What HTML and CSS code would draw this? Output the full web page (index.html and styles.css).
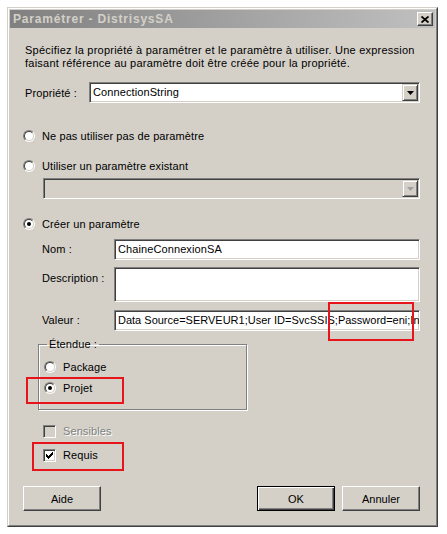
FILE: index.html
```html
<!DOCTYPE html>
<html lang="fr">
<head>
<meta charset="utf-8">
<title>Paramétrer - DistrisysSA</title>
<link rel="stylesheet" href="styles.css">
</head>
<body>
<div class="dialog">
  <div class="frame">
    <div class="titlebar">
      <span class="title">Paramétrer - DistrisysSA</span>
      <span class="close"><svg width="8" height="7" viewBox="0 0 8 7"><path d="M0.5 0.5 L7.5 6.5 M7.5 0.5 L0.5 6.5" stroke="#000" stroke-width="1.8" fill="none"/></svg></span>
    </div>
    <div class="content">
      <p class="intro">Spécifiez la propriété à paramétrer et le paramètre à utiliser. Une expression<br>faisant référence au paramètre doit être créée pour la propriété.</p>

      <div class="prop-row">
        <span class="prop-label">Propriété :</span>
        <div class="combo">
          <span class="combo-text">ConnectionString</span>
          <span class="drop"><svg width="7" height="4" viewBox="0 0 7 4"><path d="M0 0 H7 L3.5 4 Z" fill="#000"/></svg></span>
        </div>
      </div>

      <div class="radio-row r1"><span class="radio"></span><span>Ne pas utiliser pas de paramètre</span></div>
      <div class="radio-row r2"><span class="radio"></span><span>Utiliser un paramètre existant</span></div>
      <div class="combo combo-disabled">
        <span class="combo-text"></span>
        <span class="drop"><svg width="7" height="4" viewBox="0 0 7 4"><path d="M0 0 H7 L3.5 4 Z" fill="#a0a0a0"/></svg></span>
      </div>
      <div class="radio-row r3"><span class="radio checked"></span><span>Créer un paramètre</span></div>

      <div class="field f-nom">
        <span class="flabel">Nom :</span>
        <div class="input">ChaineConnexionSA</div>
      </div>
      <div class="field f-desc">
        <span class="flabel flabel-top">Description :</span>
        <div class="input textarea"></div>
      </div>
      <div class="field f-val">
        <span class="flabel">Valeur :</span>
        <div class="input input-val">Data Source=SERVEUR1;User ID=SvcSSIS;Password=eni;Initial Catalog=DistrisysSA</div>
      </div>

      <fieldset class="group">
        <legend>Étendue :</legend>
        <div class="radio-row g1"><span class="radio"></span><span>Package</span></div>
        <div class="radio-row g2"><span class="radio checked"></span><span>Projet</span></div>
      </fieldset>

      <div class="check-row c1 disabled"><span class="check"></span><span class="dis-text">Sensibles</span></div>
      <div class="check-row c2"><span class="check"><svg width="7" height="7" viewBox="0 0 7 7"><path d="M0 2h1v1h1v1h1V3h1V2h1V1h1V0h1v3H6v1H5v1H4v1H3v1H2V6H1V5H0z" fill="#000"/></svg></span><span>Requis</span></div>

      <div class="buttons">
        <button class="btn btn-aide">Aide</button>
        <span class="spacer"></span>
        <button class="btn btn-default">OK</button>
        <button class="btn">Annuler</button>
      </div>

      <span class="mark mark-pass"></span>
      <span class="mark mark-projet"></span>
      <span class="mark mark-requis"></span>
    </div>
  </div>
</div>
</body>
</html>
```
FILE: styles.css
```css
* { box-sizing: border-box; }
html, body { margin: 0; padding: 0; background: #fff; }
body {
  font-family: "Liberation Sans", Arial, sans-serif;
  font-size: 11px;
  letter-spacing: 0.1px;
  color: #000;
}
.dialog {
  margin: 7px 0 0 7px;
  width: 431px;
  height: 520px;
  border: 1px solid;
  border-color: #d4d0c8 #404040 #404040 #d4d0c8;
  background: #d4d0c8;
}
.frame {
  height: 100%;
  border: 1px solid;
  border-color: #fff #808080 #808080 #fff;
  padding: 1px;
  display: flex;
  flex-direction: column;
}
.titlebar {
  height: 18px;
  display: flex;
  align-items: center;
  justify-content: space-between;
  padding: 0 2px 0 3px;
  background: linear-gradient(to right, #808080, #c0c0c0);
}
.title {
  color: #d4d0c8;
  font-weight: bold;
  font-size: 12px;
  letter-spacing: 0.8px;
  line-height: 14px;
}
.close {
  width: 16px;
  height: 14px;
  display: flex;
  align-items: center;
  justify-content: center;
  background: #d4d0c8;
  border: 1px solid;
  border-color: #fff #404040 #404040 #fff;
  box-shadow: inset -1px -1px #808080;
}
.content {
  position: relative;
  flex: 1;
  padding: 0 15px 0 15px;
  display: flex;
  flex-direction: column;
  align-items: flex-start;
}
.intro {
  margin: 16px 0 0 0;
  line-height: 13px;
  letter-spacing: 0.23px;
  white-space: nowrap;
}

/* combo boxes and inputs */
.prop-row {
  margin-top: 12px;
  display: flex;
  align-items: center;
  width: 100%;
}
.prop-label { width: 64px; flex: none; }
.combo {
  flex: 1;
  height: 21px;
  display: flex;
  align-items: center;
  background: #fff;
  border: 1px solid;
  border-color: #808080 #fff #fff #808080;
  box-shadow: inset 1px 1px #404040, inset -1px -1px #d4d0c8;
  padding: 2px 2px 2px 3px;
}
.combo-text { flex: 1; line-height: 13px; }
.drop {
  width: 16px;
  height: 17px;
  margin-right: -1px;
  display: flex;
  align-items: center;
  justify-content: center;
  background: #d4d0c8;
  border: 1px solid;
  border-color: #d4d0c8 #404040 #404040 #d4d0c8;
  box-shadow: inset 1px 1px #fff, inset -1px -1px #808080;
}
.combo-disabled {
  flex: none;
  width: 377px;
  margin: 4px 0 0 18px;
  background: #d4d0c8;
}

/* radios */
.radio-row {
  height: 16px;
  display: flex;
  align-items: center;
  line-height: 13px;
}
.radio {
  width: 12px;
  height: 12px;
  flex: none;
  margin-right: 7px;
  border-radius: 50%;
  border: 1px solid;
  border-color: #808080 #fff #fff #808080;
  position: relative;
  background: #d4d0c8;
}
.radio::before {
  content: "";
  position: absolute;
  inset: 0;
  border-radius: 50%;
  border: 1px solid;
  border-color: #404040 #d4d0c8 #d4d0c8 #404040;
  background: #fff;
}
.radio.checked::after {
  content: "";
  position: absolute;
  left: 3px;
  top: 3px;
  width: 4px;
  height: 4px;
  border-radius: 50%;
  background: #000;
}
.r1 { margin: 25px 0 0 -2px; }
.r2 { margin: 14px 0 0 -2px; }
.r3 { margin: 17px 0 0 -2px; }

/* fields */
.field {
  display: flex;
  align-items: center;
  width: 100%;
}
.flabel {
  width: 89px;
  flex: none;
  padding-left: 17px;
  line-height: 13px;
}
.flabel-top { align-self: flex-start; padding-top: 5px; }
.input {
  flex: 1;
  height: 21px;
  background: #fff;
  border: 1px solid;
  border-color: #808080 #fff #fff #808080;
  box-shadow: inset 1px 1px #404040, inset -1px -1px #d4d0c8;
  padding: 3px 2px 0 3px;
  line-height: 13px;
  white-space: nowrap;
  overflow: hidden;
}
.textarea { height: 35px; }
.input-val { letter-spacing: 0; }
.f-nom { margin-top: 7px; }
.f-desc { margin-top: 7px; }
.f-val { margin-top: 8px; }

/* group box */
.group {
  margin: 7px 0 0 13px;
  width: 209px;
  height: 72px;
  padding: 0 0 0 5px;
  border: 1px solid #808080;
  box-shadow: inset 1px 1px #fff, 1px 1px #fff;
  min-width: 0;
}
.group legend {
  margin-left: 3px;
  padding: 0 2px;
  line-height: 13px;
}
.g1 { margin-top: 8px; }
.g2 { margin-top: 5px; }

/* check boxes */
.check-row {
  height: 15px;
  display: flex;
  align-items: center;
  margin-left: 18px;
  line-height: 13px;
}
.check {
  width: 13px;
  height: 13px;
  flex: none;
  margin-right: 7px;
  display: flex;
  align-items: center;
  justify-content: center;
  background: #fff;
  border: 1px solid;
  border-color: #808080 #fff #fff #808080;
  box-shadow: inset 1px 1px #404040, inset -1px -1px #d4d0c8;
}
.disabled .check { background: #d4d0c8; }
.dis-text { color: #808080; text-shadow: 1px 1px #fff; }
.c1 { margin-top: 14px; }
.c2 { margin-top: 9px; }

/* buttons */
.buttons {
  margin: 23px 0 0 -2px;
  width: calc(100% + 2px);
  display: flex;
  gap: 7px;
}
.spacer { flex: 1; }
.btn {
  width: 78px;
  height: 25px;
  padding: 0;
  font: inherit;
  color: #000;
  background: #d4d0c8;
  border: 1px solid;
  border-color: #fff #404040 #404040 #fff;
  box-shadow: inset -1px -1px #808080;
}
.btn-default {
  border-color: #000;
  box-shadow: inset 1px 1px #fff, inset -1px -1px #404040, inset -2px -2px #808080;
}

/* annotation marks */
.mark {
  position: absolute;
  border: 2px solid #e8141b;
}
.mark-pass { left: 318px; top: 274px; width: 86px; height: 39px; }
.mark-projet { left: 16px; top: 349px; width: 98px; height: 27px; }
.mark-requis { left: 22px; top: 414px; width: 92px; height: 29px; }
```
